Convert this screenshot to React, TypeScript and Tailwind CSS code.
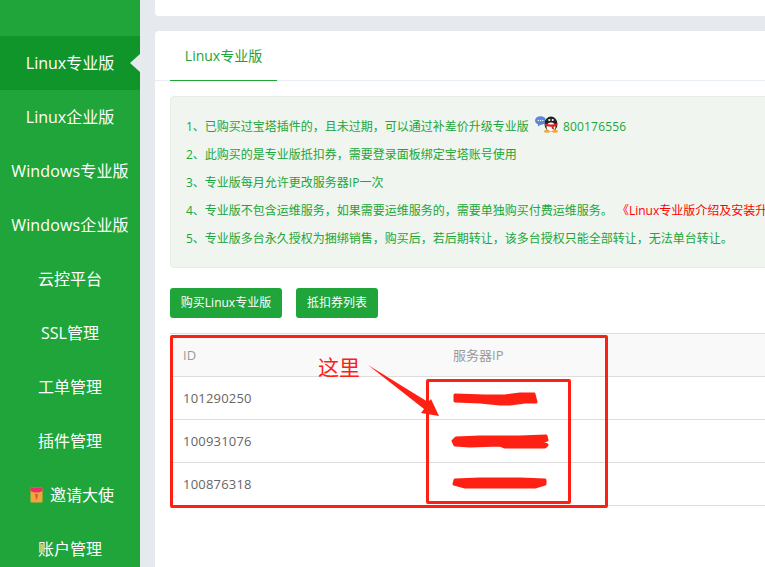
import React from "react";

const fontStack = {
  fontFamily: '"Open Sans", "Noto Sans CJK SC", sans-serif',
};

const menuItems = [
  "Linux专业版",
  "Linux企业版",
  "Windows专业版",
  "Windows企业版",
  "云控平台",
  "SSL管理",
  "工单管理",
  "插件管理",
  "邀请大使",
  "账户管理",
];

const rows = ["101290250", "100931076", "100876318"];

const RedPacket = () => (
  <svg width="13" height="16" viewBox="0 0 13 16" className="mr-[7px]">
    <rect x="0.5" y="0.5" width="12" height="15" rx="1" fill="#f2a53a" />
    <path d="M0.5 1.5a1 1 0 0 1 1-1h10a1 1 0 0 1 1 1v2.5q-6 3-12 0z" fill="#ea2f6b" />
    <path d="M5 7h3l-1 5.5h-1z" fill="#e2553a" />
  </svg>
);

const QQIcon = () => (
  <svg width="24" height="17" viewBox="0 0 24 17" className="ml-[6px] mr-[4px] -mt-[6px] inline-block align-middle">
    <ellipse cx="5.500" cy="4.500" rx="5.500" ry="4.300" fill="#5b86d6" />
    <path d="M3 7l0 3.500 3.500-2.500z" fill="#5b86d6" />
    <circle cx="3.300" cy="4.500" r="0.700" fill="#fff" />
    <circle cx="5.500" cy="4.500" r="0.700" fill="#fff" />
    <circle cx="7.700" cy="4.500" r="0.700" fill="#fff" />
    <ellipse cx="16" cy="8" rx="6.500" ry="7.500" fill="#222" />
    <ellipse cx="16" cy="11" rx="4.500" ry="4.500" fill="#fff" />
    <circle cx="14.300" cy="4" r="1.100" fill="#fff" />
    <circle cx="17.700" cy="4" r="1.100" fill="#fff" />
    <path d="M10 7.500q6 2 12 0v2.200q-2 1-3.500 1l1 3-2.500-1-.5-2q-3 0-6.500-1z" fill="#e0201c" />
    <ellipse cx="12" cy="15.400" rx="3" ry="1.400" fill="#f5a623" />
    <ellipse cx="20" cy="15.400" rx="3" ry="1.400" fill="#f5a623" />
  </svg>
);

const Sidebar = () => (
  <aside className="w-[140px] h-full shrink-0 bg-[#20a53a] pt-[36px] overflow-hidden">
    {menuItems.map((item, i) => (
      <div
        key={item}
        className={`relative h-[54px] shrink-0 flex items-center justify-center text-[16px] text-white ${
          i === 0 ? "bg-[#10952a]" : ""
        } ${item === "邀请大使" ? "pl-[4px]" : ""} ${item.startsWith("Windows") ? "tracking-[0.15px]" : ""}`}
      >
        {item === "邀请大使" && <RedPacket />}
        {item}
        {i === 0 && (
          <span className="absolute right-0 top-[18px] border-y-[9px] border-r-[10px] border-y-transparent border-r-[#e6e9ee]" />
        )}
      </div>
    ))}
  </aside>
);

const Notice = () => (
  <div className="ml-[15px] mt-[15px] h-[172px] rounded-[4px] border border-[#e8eee6] bg-[#f0f5ef] pl-[15px] pt-[16px] text-[12px] leading-[28px] text-[#20a53a] whitespace-nowrap overflow-hidden">
    <p>
      1、已购买过宝塔插件的，且未过期，可以通过补差价升级专业版
      <QQIcon />
      <span className="tracking-[0.2px]">800176556</span>
    </p>
    <p>2、此购买的是专业版抵扣券，需要登录面板绑定宝塔账号使用</p>
    <p>3、专业版每月允许更改服务器IP一次</p>
    <p>
      4、专业版不包含运维服务，如果需要运维服务的，需要单独购买付费运维服务。
      <span className="ml-[10px] text-[#ff0000]">《Linux专业版介绍及安装升级教程》</span>
    </p>
    <p>5、专业版多台永久授权为捆绑销售，购买后，若后期转让，该多台授权只能全部转让，无法单台转让。</p>
  </div>
);

const VoucherTable = () => (
  <table className="ml-[15px] mt-[15px] w-[740px] table-fixed border-collapse text-[13px]">
    <thead>
      <tr className="h-[43px] border-y border-[#dddddd] bg-[#f9f9f9] text-[#999999]">
        <th className="w-[283px] pl-[13px] pt-[2px] text-left font-normal">ID</th>
        <th className="pt-[2px] text-left font-normal">服务器IP</th>
      </tr>
    </thead>
    <tbody>
      {rows.map((id) => (
        <tr key={id} className="h-[43px] border-b border-[#dddddd] text-[#666666]">
          <td className="pl-[13px] pt-[2px] tracking-[0.2px]">{id}</td>
          <td />
        </tr>
      ))}
    </tbody>
  </table>
);

// red marks somebody drew on top of the screenshot
const Annotations = () => (
  <>
    <div className="absolute left-[170px] top-[335px] h-[173px] w-[438px] rounded-[2px] border-[3px] border-[#ff2014]" />
    <div className="absolute left-[426px] top-[379px] h-[125px] w-[145px] rounded-[2px] border-[3px] border-[#ff2014]" />
    <span className="absolute left-[318px] top-[353px] text-[21px] leading-[28px] text-[#ff2014]">这里</span>
    <svg className="absolute left-0 top-0" width="765" height="567" viewBox="0 0 765 567" fill="none">
      <path d="M368 365L428 402L431 399L439 416L421 413L424 409z" fill="#ff2014" />
      <path
        d="M455 395L485 396L505 396L520 394L534 394L536 402L525 402L510 404L500 404L480 402L455 401z"
        fill="#ff2014"
        stroke="#ff2014"
        strokeWidth="3"
        strokeLinejoin="round"
      />
      <path
        d="M456 438L480 437L520 437L546 436L547 440L540 442L547 445L545 447L505 447L500 445L470 446L455 445L453 441z"
        fill="#ff2014"
        stroke="#ff2014"
        strokeWidth="3"
        strokeLinejoin="round"
      />
      <path
        d="M455 480L480 479L520 479L545 480L545 484L535 487L500 487L465 487L454 484z"
        fill="#ff2014"
        stroke="#ff2014"
        strokeWidth="3"
        strokeLinejoin="round"
      />
    </svg>
  </>
);

export default function App() {
  return (
    <div style={fontStack} className="relative flex h-[567px] w-[765px] overflow-hidden bg-[#e6e9ee]">
      <Sidebar />
      <main className="ml-[15px] w-[900px] shrink-0">
        <div className="h-[16px] rounded-b-[4px] bg-white" />
        <section className="mt-[15px] h-[560px] rounded-[4px] bg-white">
          <div className="h-[50px] border-b border-[#e8edf3] pl-[15px]">
            <div className="h-[50px] w-[107px] border-b border-[#20a53a] text-center text-[14px] leading-[50px] text-[#20a53a]">
              Linux专业版
            </div>
          </div>
          <Notice />
          <div className="ml-[15px] mt-[20px] flex gap-[14px]">
            <button className="h-[30px] w-[112px] rounded-[3px] bg-[#20a53a] text-[12px] text-white">
              购买Linux专业版
            </button>
            <button className="h-[30px] w-[82px] rounded-[3px] bg-[#20a53a] text-[12px] text-white">
              抵扣券列表
            </button>
          </div>
          <VoucherTable />
        </section>
      </main>
      <Annotations />
    </div>
  );
}
